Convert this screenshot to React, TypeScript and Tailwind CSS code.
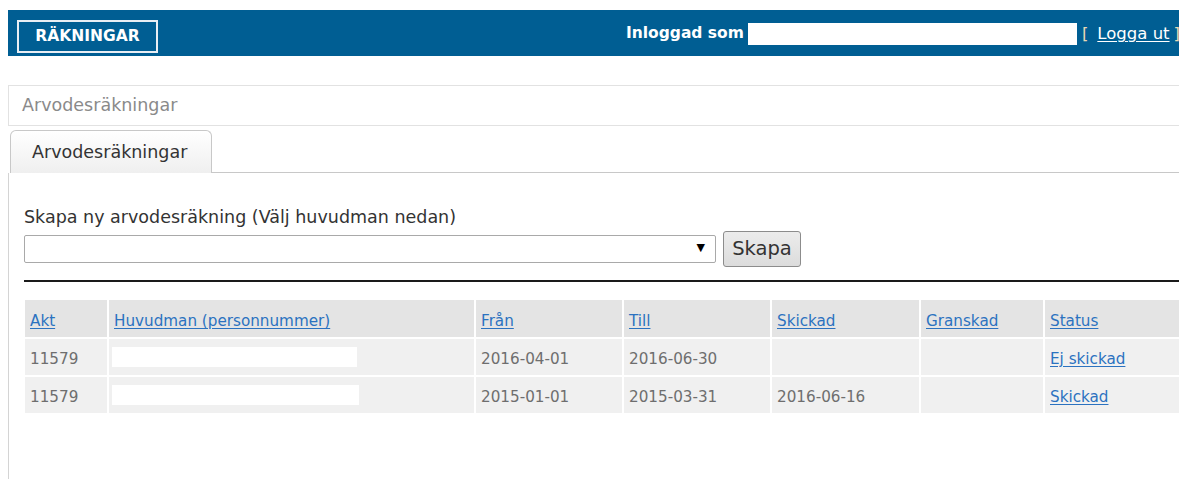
import React from "react";

const font = { fontFamily: '"DejaVu Sans", Verdana, sans-serif' };

type Row = {
  akt: string;
  from: string;
  to: string;
  sent: string;
  reviewed: string;
  status: string;
  nameW: number;
};

const rows: Row[] = [
  { akt: "11579", from: "2016-04-01", to: "2016-06-30", sent: "", reviewed: "", status: "Ej skickad", nameW: 245 },
  { akt: "11579", from: "2015-01-01", to: "2015-03-31", sent: "2016-06-16", reviewed: "", status: "Skickad", nameW: 247 },
];

const headers = ["Akt", "Huvudman (personnummer)", "Från", "Till", "Skickad", "Granskad", "Status"];

function HeaderBar() {
  return (
    <div className="ml-[8px] mt-[10px] flex h-[46px] items-start bg-[#005e93] text-white">
      <div className="ml-[9px] mt-[10px] flex h-[33px] w-[141px] items-center justify-center border-2 border-[#e8eef4] pt-[1px] text-[15.5px] font-bold">
        RÄKNINGAR
      </div>
      <div className="ml-auto flex h-full items-center pr-[4px] pt-[2px] text-[16.5px]">
        <span className="text-[15.5px] font-bold">Inloggad som</span>
        <span className="ml-[4px] h-[22px] w-[329px] bg-white" />
        <span className="ml-[5px] text-[#e6d9b5]">[</span>
        <a className="ml-[9px] underline decoration-1 underline-offset-2">Logga ut</a>
        <span className="ml-[4px] text-[#e6d9b5]">]</span>
      </div>
    </div>
  );
}

function Breadcrumb() {
  return (
    <div className="ml-[8px] mt-[29px] flex h-[41px] items-center border-y border-l border-[#e2e2e2] pl-[13px] text-[17.5px] text-[#8a8a8a]">
      Arvodesräkningar
    </div>
  );
}

function Tabs() {
  return (
    <div className="ml-[8px] mt-[4px] flex h-[43px]">
      <div className="ml-[2px] flex w-[202px] items-center rounded-t-[6px] border border-b-0 border-[#c8c8c8] bg-gradient-to-b from-[#ffffff] to-[#efefef] pl-[21px] text-[17.5px] text-[#333]">
        Arvodesräkningar
      </div>
      <div className="flex-1 border-b border-[#c8c8c8]" />
    </div>
  );
}

function CreateForm() {
  return (
    <div>
      <div className="pt-[34px] text-[17.5px] leading-[21px] text-[#333]">
        Skapa ny arvodesräkning (Välj huvudman nedan)
      </div>
      <div className="mt-[3px] flex h-[36px] items-center">
        <div className="relative h-[28px] w-[692px] rounded-[2px] border border-[#a9a9a9] bg-white">
          <span className="absolute right-[10px] top-[4px] text-[11px] text-black">▼</span>
        </div>
        <button className="ml-[7px] h-[36px] w-[78px] rounded-[3px] border border-[#8c8c8c] bg-gradient-to-b from-[#ececec] to-[#dcdcdc] text-[19.5px] text-[#333]">
          Skapa
        </button>
      </div>
      <div className="mt-[13px] h-[2px] bg-[#1a1a1a]" />
    </div>
  );
}

function InvoiceTable() {
  const cols = "grid grid-cols-[82px_365px_146px_146px_147px_122px_1fr] gap-x-[2px]";
  const cell = "flex items-center bg-[#f0f0f0] px-[5px] pt-[5px]";
  return (
    <div className="ml-[1px] mt-[18px] flex flex-col gap-y-[2px] text-[15.2px]">
      <div className={`${cols} h-[37px]`}>
        {headers.map((h) => (
          <div key={h} className="flex items-center bg-[#e4e4e4] px-[5px] pt-[5px]">
            <a className="text-[#2b72c0] underline decoration-1 underline-offset-2">{h}</a>
          </div>
        ))}
      </div>
      {rows.map((r, i) => (
        <div key={i} className={`${cols} h-[36px] text-[#6e6e6e]`}>
          <div className={cell}>{r.akt}</div>
          <div className="flex items-center bg-[#f0f0f0] pl-[3px]">
            <span className="h-[20px] bg-white" style={{ width: r.nameW }} />
          </div>
          <div className={cell}>{r.from}</div>
          <div className={cell}>{r.to}</div>
          <div className={cell}>{r.sent}</div>
          <div className={cell}>{r.reviewed}</div>
          <div className={cell}>
            <a className="text-[#2b72c0] underline decoration-1 underline-offset-2">{r.status}</a>
          </div>
        </div>
      ))}
    </div>
  );
}

export default function App() {
  return (
    <div className="h-[479px] w-full overflow-hidden bg-white" style={font}>
      <div className="w-[1184px]">
        <HeaderBar />
        <Breadcrumb />
        <Tabs />
        <div className="ml-[8px] h-[320px] border-l border-[#d4d4d4] pl-[15px]">
          <CreateForm />
          <InvoiceTable />
        </div>
      </div>
    </div>
  );
}
